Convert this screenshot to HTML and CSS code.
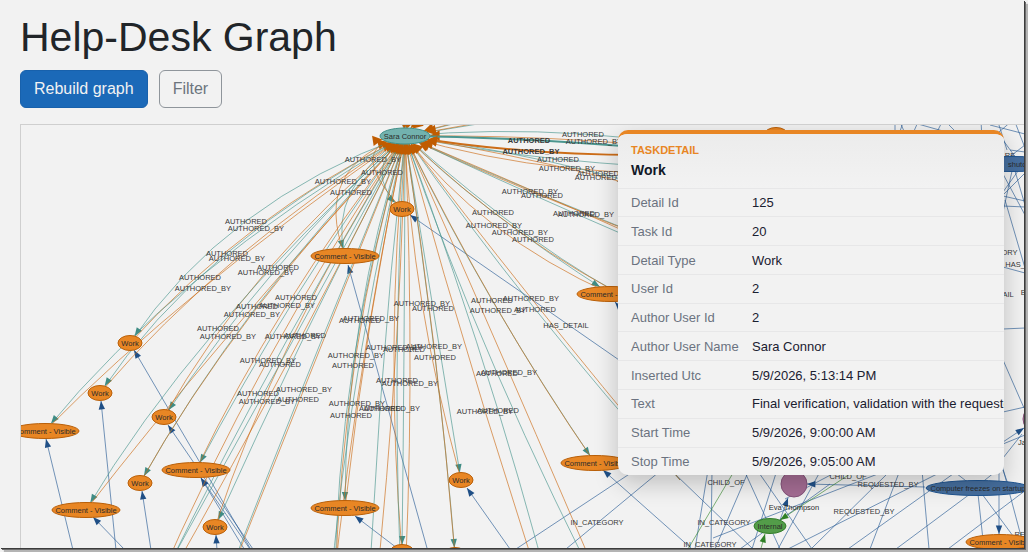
FILE: index.html
```html
<!DOCTYPE html>
<html lang="en">
<head>
<meta charset="utf-8">
<title>Help-Desk Graph</title>
<link rel="stylesheet" href="styles.css">
</head>
<body>
<main class="window">
  <h1 class="title">Help-Desk Graph</h1>
  <div class="toolbar">
    <button class="btn btn-primary" type="button">Rebuild graph</button>
    <button class="btn btn-outline" type="button">Filter</button>
  </div>
  <section class="graph" aria-label="Graph">
    <svg class="canvas" id="canvas" xmlns="http://www.w3.org/2000/svg"></svg>
    <aside class="card">
      <header class="card-head">
        <div class="card-kind">TASKDETAIL</div>
        <div class="card-name">Work</div>
      </header>
      <table class="props">
        <tbody>
          <tr><th scope="row">Detail Id</th><td>125</td></tr>
          <tr><th scope="row">Task Id</th><td>20</td></tr>
          <tr><th scope="row">Detail Type</th><td>Work</td></tr>
          <tr><th scope="row">User Id</th><td>2</td></tr>
          <tr><th scope="row">Author User Id</th><td>2</td></tr>
          <tr><th scope="row">Author User Name</th><td>Sara Connor</td></tr>
          <tr><th scope="row">Inserted Utc</th><td>5/9/2026, 5:13:14 PM</td></tr>
          <tr><th scope="row">Text</th><td>Final verification, validation with the requester</td></tr>
          <tr><th scope="row">Start Time</th><td>5/9/2026, 9:00:00 AM</td></tr>
          <tr><th scope="row">Stop Time</th><td>5/9/2026, 9:05:00 AM</td></tr>
        </tbody>
      </table>
    </aside>
  </section>
</main>
<script src="graph.js"></script>
</body>
</html>
```
FILE: styles.css
```css
* { box-sizing: border-box; }

body {
  margin: 0;
  height: 100vh;
  padding: 0 4px 4px 0;
  background: #f2f2f2;
  color: #212529;
  font-family: "Liberation Sans", Arial, sans-serif;
  font-size: 16px;
  overflow: hidden;
}

.window {
  display: flex;
  flex-direction: column;
  height: 100%;
  padding: 12px 0 0 20px;
  background: #f2f2f2;
  box-shadow: 1px 1px 0 #3c3c3c, 2px 2px 0 #6e6e6e, 4px 4px 1px #b4b4b4;
}

.title {
  margin: 0 0 8px;
  font-size: 41px;
  font-weight: 400;
  line-height: 50px;
}

.toolbar {
  display: flex;
  gap: 11px;
  margin-bottom: 16px;
}

.btn {
  padding: 6px 13px;
  border: 1px solid;
  border-radius: 6px;
  font: inherit;
  line-height: 24px;
}

.btn-primary {
  background: #1b69b8;
  border-color: #1861ac;
  color: #f2f2f2;
}

.btn-outline {
  background: transparent;
  border-color: #8f959b;
  color: #6c757d;
}

.graph {
  position: relative;
  flex: 1;
  min-height: 0;
  border: solid #cfcfcf;
  border-width: 1px 0 0 1px;
  overflow: hidden;
}

.canvas {
  display: block;
  width: 100%;
  height: 100%;
}

.canvas text {
  font-size: 15px;
  text-anchor: middle;
  dominant-baseline: central;
  fill: #2c2c2c;
}

.canvas .edge-label { fill: #383838; }
.canvas .start { text-anchor: start; }
.canvas .strong { font-weight: 700; }

.edge {
  fill: none;
  stroke-width: 2px;
  stroke-opacity: .65;
}

.edge.selected {
  stroke-width: 4px;
  stroke-opacity: 1;
}

.authored { stroke: #4b968f; }
.authored-by { stroke: #cc6d18; }
.detail { stroke: #2b5d97; }
.child { stroke: #3c8c32; }
.head-authored { fill: #3f8c84; }
.head-authored-by { fill: #c05c00; }
.head-detail { fill: #1f4f86; }
.head-child { fill: #2f8027; }

.node { stroke-width: 2px; }
.node.task-detail { fill: #e88624; stroke: #b95f08; }
.node.user { fill: #72b2ae; stroke: #43918a; }
.node.ticket { fill: #466f9f; stroke: #1f5490; }
.node.person { fill: #a56d94; stroke: #85527a; }
.node.category { fill: #539c49; stroke: #327d29; }

.card {
  position: absolute;
  top: 5px;
  right: 20px;
  width: 386px;
  border-top: 4px solid #e88624;
  border-radius: 10px;
  background: #f2f2f2;
  box-shadow: 0 8px 24px rgba(0, 0, 0, .22);
  overflow: hidden;
}

.card-head {
  padding: 8px 13px 6px;
  border-bottom: 1px solid #e7e7e8;
  background: linear-gradient(#ececec, #f2f2f2);
}

.card-kind {
  color: #e88624;
  font-size: 11px;
  font-weight: 700;
  line-height: 16px;
}

.card-name {
  color: #111827;
  font-size: 14px;
  font-weight: 700;
  line-height: 24px;
}

.props {
  width: 100%;
  height: 286px;
  table-layout: fixed;
  border-collapse: collapse;
  font-size: 13px;
}

.props th,
.props td {
  padding: 0;
  white-space: nowrap;
  text-align: left;
}

.props th {
  width: 134px;
  padding-left: 13px;
  color: #6b7280;
  font-weight: 400;
}

.props td { color: #1a2030; }
.props tr + tr { border-top: 1px solid #e7e7e8; }
```
FILE: graph.js
```js
const svg = document.getElementById('canvas');
const NS = 'http://www.w3.org/2000/svg';
const ZOOM = 2;
const ORIGIN = [21, 125];
const hub = { x: 405, y: 136, rx: 25, ry: 8 };

const px = x => (x - ORIGIN[0]) * ZOOM;
const py = y => (y - ORIGIN[1]) * ZOOM;

function add(tag, attrs, text) {
  const el = document.createElementNS(NS, tag);
  for (const key in attrs) el.setAttribute(key, attrs[key]);
  if (text) el.textContent = text;
  svg.appendChild(el);
}

// x, y, kind, label
const nodes = [
  [402, 209, 'w'], [345, 256, 'c'], [130, 343, 'w'], [100, 393, 'w'],
  [45, 431, 'c'], [164, 417, 'w'], [196, 470, 'c'], [140, 483, 'w'],
  [86, 510, 'c'], [215, 527, 'w'], [345, 508, 'c'], [461, 480, 'w'],
  [402, 552, 'w'], [455, 555, 'w'], [611, 294, 'c'], [595, 463, 'c'],
  [1000, 542, 'c'], [776, 135, 'w']
].map(([x, y, k]) => ({ x, y, rx: k === 'w' ? 12 : 34, ry: 7.5, label: k === 'w' ? 'Work' : 'Comment - Visible' }));

// Hub links: target, midpoint of AUTHORED, midpoint of AUTHORED_BY
const links = [
  [0, [382, 172], [373, 159]],
  [1, [351, 192], [343, 181]],
  [2, [246, 221], [256, 228]],
  [3, [227, 253], [237, 258]],
  [4, [200, 277], [203, 288]],
  [5, [278, 267], [266, 272]],
  [8, [218, 328], [228, 336]],
  [7, [257, 306], [252, 314]],
  [6, [296, 297], [287, 305]],
  [9, [305, 335], [293, 336]],
  [[155, 590], [280, 364], [268, 360]],
  [[128, 650], [258, 393], [267, 401]],
  [[200, 650], [298, 399], [304, 389]],
  [10, [360, 320], [371, 318]],
  [[335, 590], [353, 365], [356, 355]],
  [[325, 670], [351, 415], [357, 403]],
  [12, [404, 349], [394, 347]],
  [[403, 620], [397, 380], [410, 383]],
  [[365, 690], [380, 408], [392, 408]],
  [11, [433, 308], [422, 303]],
  [13, [435, 357], [434, 346]],
  [15, [492, 300], [498, 310]],
  [[680, 480], [535, 309], [531, 298]],
  [[620, 630], [497, 373], [509, 372]],
  [[572, 680], [498, 410], [485, 411]],
  [14, [493, 212], [494, 225]],
  [[640, 304], [533, 239], [520, 232]],
  [[690, 254], [542, 195], [530, 191]],
  [[760, 292], [574, 213], [586, 214]],
  [[730, 170], [558, 159], [567, 168]],
  [[790, 232], [598, 173], [603, 177]],
  [[770, 160], [583, 134], [594, 141]]
];

// Hub links whose far end is out of view: target and bend midpoint
const distant = [
  [430, 0, 420, 68], [470, 40, 440, 86], [398, 0, 400, 70], [415, 20, 410, 80],
  [500, 30, 455, 84], [700, 70, 550, 101], [740, 94, 570, 111], [385, 10, 394, 76]
];

const direct = [
  [[720, 430], [410, 215], 1], [[427, 548], [348, 265], 1], [[250, 548], [134, 350], 1],
  [[116, 550], [101, 401], 1], [[73, 550], [46, 439], 1], [[125, 550], [93, 517], 1],
  [[151, 550], [142, 491], 1], [[255, 552], [168, 425], 1], [[252, 552], [201, 478], 1],
  [[246, 552], [201, 478], 1], [[217, 550], [216, 535], 1], [[397, 548], [355, 516], 1],
  [[510, 549], [467, 488], 1], [[692, 549], [603, 470], 1], [[640, 330], [615, 302], 1],
  [[516, 549], [640, 467]], [[566, 549], [665, 467]], [[675, 474], [753, 549]],
  [[708, 470], [695, 549]], [[712, 470], [711, 549]], [[749, 470], [715, 549]],
  [[744, 470], [780, 549]], [[757, 470], [812, 549]], [[777, 470], [752, 549]],
  [[822, 468], [778, 549]], [[713, 538], [888, 470]], [[788, 549], [945, 470]],
  [[780, 520], [788, 498], 1], [[925, 487], [807, 484], 1],
  [[840, 470], [785, 499]], [[887, 474], [811, 549]], [[900, 470], [870, 549]],
  [[953, 474], [848, 549]], [[970, 494], [896, 549]], [[1026, 490], [948, 549]],
  [[922, 470], [929, 549]], [[978, 494], [984, 549]], [[982, 494], [1016, 540]],
  [[999, 470], [999, 534], 1], [[1002, 465], [1022, 540]], [[952, 470], [970, 484]],
  [[1000, 468], [980, 484]], [[830, 484], [740, 549]],
  [[895, 120], [895, 140]], [[899, 120], [908, 140]], [[904, 120], [899, 134]],
  [[918, 122], [910, 140]], [[918, 124], [950, 133]], [[942, 122], [935, 136]],
  [[946, 122], [958, 134]], [[981, 120], [982, 140]], [[998, 122], [1007, 150]],
  [[1025, 134], [990, 125]], [[1013, 120], [992, 138]], [[1015, 122], [1025, 148]],
  [[1003, 140], [1016, 158]], [[1025, 145], [1008, 158]], [[1010, 150], [1025, 152]],
  [[1012, 171], [1003, 212]], [[1018, 171], [1003, 192]], [[1003, 174], [1025, 215]],
  [[1003, 196], [1025, 201]], [[1003, 206], [1025, 207]], [[1005, 200], [1025, 268]],
  [[1015, 171], [1025, 205]], [[1003, 267], [1025, 273]], [[1025, 173], [1003, 195]],
  [[1003, 329], [1025, 328]], [[1003, 360], [1024, 408]], [[1003, 412], [1025, 407]],
  [[1003, 442], [1024, 428], 1], [[1003, 444], [1025, 435]], [[1003, 458], [1022, 434]],
  [[1003, 470], [1008, 484]]
];

const green = [
  [[736, 468], [688, 549]], [[850, 474], [780, 520], 1], [[760, 552], [765, 534], 1]
];

const labels = [
  ['HAS_DETAIL', 566, 325], ['IN_CATEGORY', 597, 522], ['IN_CATEGORY', 724, 522],
  ['IN_CATEGORY', 710, 544], ['CHILD_OF', 726, 482], ['CHILD_OF', 848, 476],
  ['REQUESTED_BY', 888, 484], ['REQUESTED_BY', 864, 511], ['IN_CATEGORY', 991, 252],
  ['HAS_DETAIL', 1028, 264], ['HAS_DETAIL', 991, 294], ['BELONGS_TO', 1046, 292],
  ['REQUESTED_BY', 1045, 534], ['RE', 1010, 155]
];

function arrow(tip, from, kind, size = 9, spread = 0.36) {
  const a = Math.atan2(tip[1] - from[1], tip[0] - from[0]);
  const pts = [tip];
  for (const side of [-1, 1]) {
    const t = a + side * spread;
    pts.push([tip[0] - size * Math.cos(t), tip[1] - size * Math.sin(t)]);
  }
  add('polygon', { points: pts.map(p => px(p[0]) + ',' + py(p[1])).join(' '), class: 'head-' + kind });
}

function rim(node, toward) {
  const dx = toward[0] - node.x, dy = toward[1] - node.y;
  const k = 1 / Math.hypot(dx / node.rx, dy / node.ry);
  return [node.x + dx * k, node.y + dy * k];
}

function curve(target, mid, kind, selected) {
  const c = [2 * mid[0] - (hub.x + target.x) / 2, 2 * mid[1] - (hub.y + target.y) / 2];
  const d = `M${px(hub.x)} ${py(hub.y)}Q${px(c[0])} ${py(c[1])} ${px(target.x)} ${py(target.y)}`;
  add('path', { d, class: `edge ${kind}${selected ? ' selected' : ''}` });
  if (kind === 'authored-by') arrow(rim(hub, c), c, kind, 11, 0.5);
  else if (target.rx) arrow(rim(target, c), c, kind);
}

function line([from, to, head], kind) {
  add('path', { d: `M${px(from[0])} ${py(from[1])}L${px(to[0])} ${py(to[1])}`, class: 'edge ' + kind });
  if (head) arrow(to, from, kind);
}

function label(text, x, y, cls = 'edge-label') {
  add('text', { x: px(x), y: py(y), class: cls }, text);
}

function ellipse(n, kind) {
  add('ellipse', { cx: px(n.x), cy: py(n.y), rx: n.rx * ZOOM, ry: n.ry * ZOOM, class: 'node ' + kind });
}

direct.forEach(e => line(e, 'detail'));
green.forEach(e => line(e, 'child'));
links.forEach(([t, a, b]) => {
  const target = Array.isArray(t) ? { x: t[0], y: t[1] } : nodes[t];
  curve(target, a, 'authored');
  curve(target, b, 'authored-by');
});
distant.forEach(([x, y, mx, my]) => {
  curve({ x, y }, [mx, my], 'authored');
  curve({ x, y }, [mx + 3, my - 2], 'authored-by');
});
curve({ x: 660, y: 149 }, [529, 140], 'authored', true);
curve({ x: 660, y: 155 }, [531, 151], 'authored-by', true);

links.forEach(([, a, b]) => {
  label('AUTHORED', ...a);
  label('AUTHORED_BY', ...b);
});
label('AUTHORED', 529, 140, 'edge-label strong');
label('AUTHORED_BY', 531, 151, 'edge-label strong');
labels.forEach(l => label(...l));

nodes.forEach(n => {
  ellipse(n, 'task-detail');
  label(n.label, n.x, n.y, 'node-label');
});
ellipse(hub, 'user');
label('Sara Connor', hub.x, hub.y, 'node-label');
ellipse({ x: 1012, y: 164, rx: 58, ry: 7.5 }, 'ticket');
label('shutdown', 1008, 164, 'node-label start');
ellipse({ x: 978, y: 488, rx: 52, ry: 7.5 }, 'ticket');
label('Computer freezes on startup', 978, 488, 'node-label');
ellipse({ x: 794, y: 484, rx: 13, ry: 13 }, 'person');
label('Eva Thompson', 794, 507, 'node-label');
ellipse({ x: 1036, y: 419, rx: 13, ry: 13 }, 'person');
label('James Davis', 1018, 442, 'node-label start');
ellipse({ x: 770, y: 526, rx: 16, ry: 7.5 }, 'category');
label('Internal', 770, 526, 'node-label');

function fit() {
  svg.setAttribute('viewBox', `0 0 ${svg.clientWidth * ZOOM} ${svg.clientHeight * ZOOM}`);
}
addEventListener('resize', fit);
fit();
```
